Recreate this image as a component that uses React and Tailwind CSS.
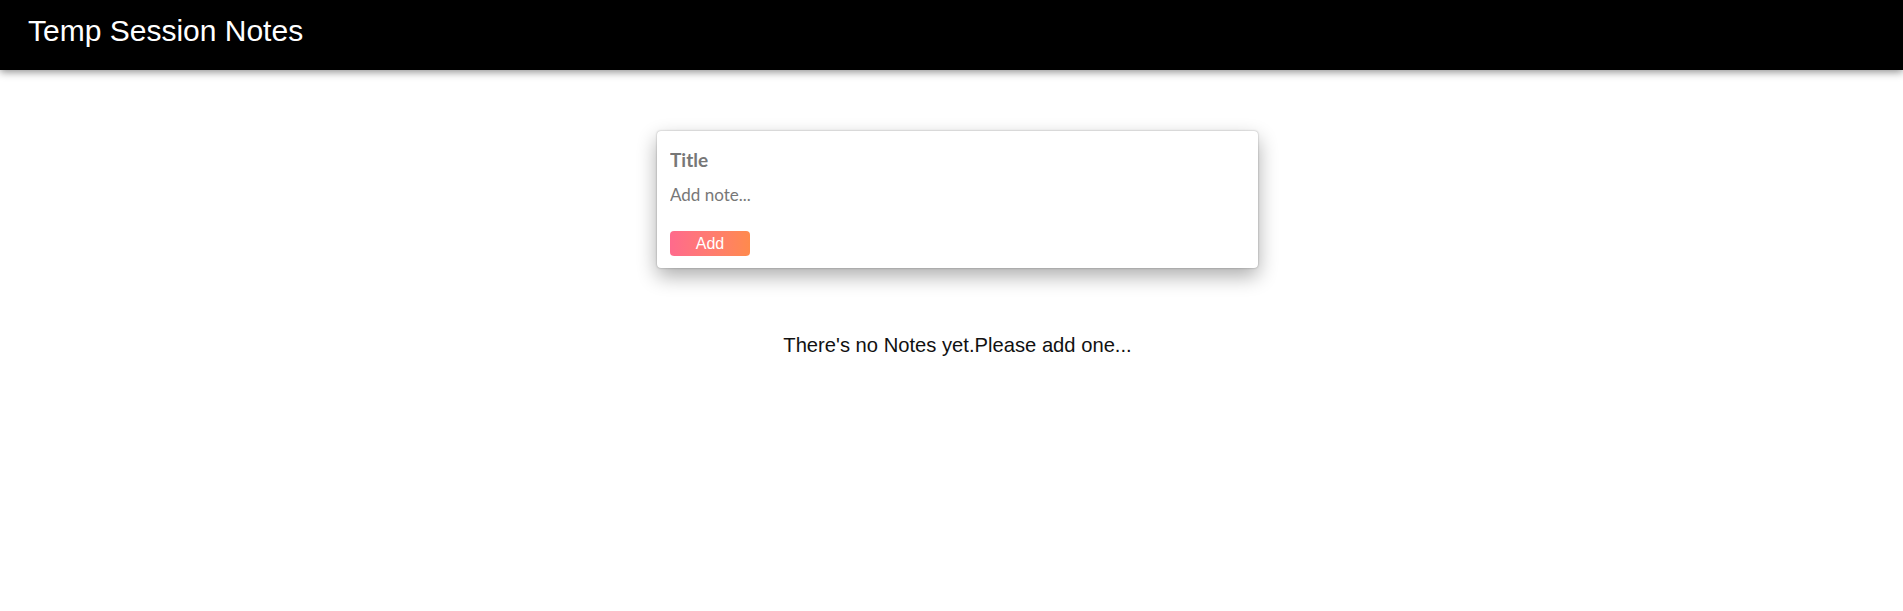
import React, { useState } from 'react';

const App = () => {
  const [title, setTitle] = useState('');
  const [content, setContent] = useState('');
  const [notes, setNotes] = useState([]);

  const addNote = (e) => {
    e.preventDefault();
    if (!title && !content) return;
    setNotes([...notes, { id: Date.now(), title, content }]);
    setTitle('');
    setContent('');
  };

  return (
    <div className="min-h-screen bg-white font-['Liberation_Sans',Arial,sans-serif]">
      {/* header */}
      <header className="h-[70px] bg-black pl-[28px] pt-[14px] shadow-[0_2px_8px_rgba(0,0,0,0.45)]">
        <h1 className="text-[30px] leading-[34px] text-white">Temp Session Notes</h1>
      </header>

      <main className="flex flex-col items-center pl-[12px]">
        {/* create note form */}
        <form
          onSubmit={addNote}
          className="mt-[61px] w-[601px] rounded-[4px] bg-white px-[13px] pt-[17px] pb-[12px] font-['Lato',sans-serif] shadow-[0_0_2px_rgba(0,0,0,0.35),0_8px_20px_rgba(0,0,0,0.33)]"
        >
          <input
            value={title}
            onChange={(e) => setTitle(e.target.value)}
            placeholder="Title"
            className="block h-[24px] w-full text-[19px] leading-[24px] font-bold text-[#555] outline-none placeholder:text-[#777]"
          />
          <textarea
            value={content}
            onChange={(e) => setContent(e.target.value)}
            placeholder="Add note..."
            rows={1}
            className="mt-[13px] block h-[20px] w-full resize-none overflow-hidden text-[17px] leading-[20px] text-[#444] outline-none placeholder:text-[#777]"
          />
          <button
            type="submit"
            className="mt-[26px] block h-[25px] w-[80px] rounded-[4px] bg-gradient-to-r from-[#ff6a8c] to-[#ff8a4c] font-['Liberation_Sans',Arial,sans-serif] text-[16px] leading-[25px] text-white"
          >
            Add
          </button>
        </form>

        {/* notes */}
        {notes.length === 0 ? (
          <p className="mt-[66px] text-[20.2px] leading-[23px] text-[#111]">
            There's no Notes yet.Please add one...
          </p>
        ) : (
          <div className="mt-[40px] flex flex-wrap gap-4">
            {notes.map((note) => (
              <div key={note.id} className="w-[240px] rounded-[4px] p-3 shadow">
                <h2 className="font-bold">{note.title}</h2>
                <p>{note.content}</p>
              </div>
            ))}
          </div>
        )}
      </main>
    </div>
  );
};

export default App;
